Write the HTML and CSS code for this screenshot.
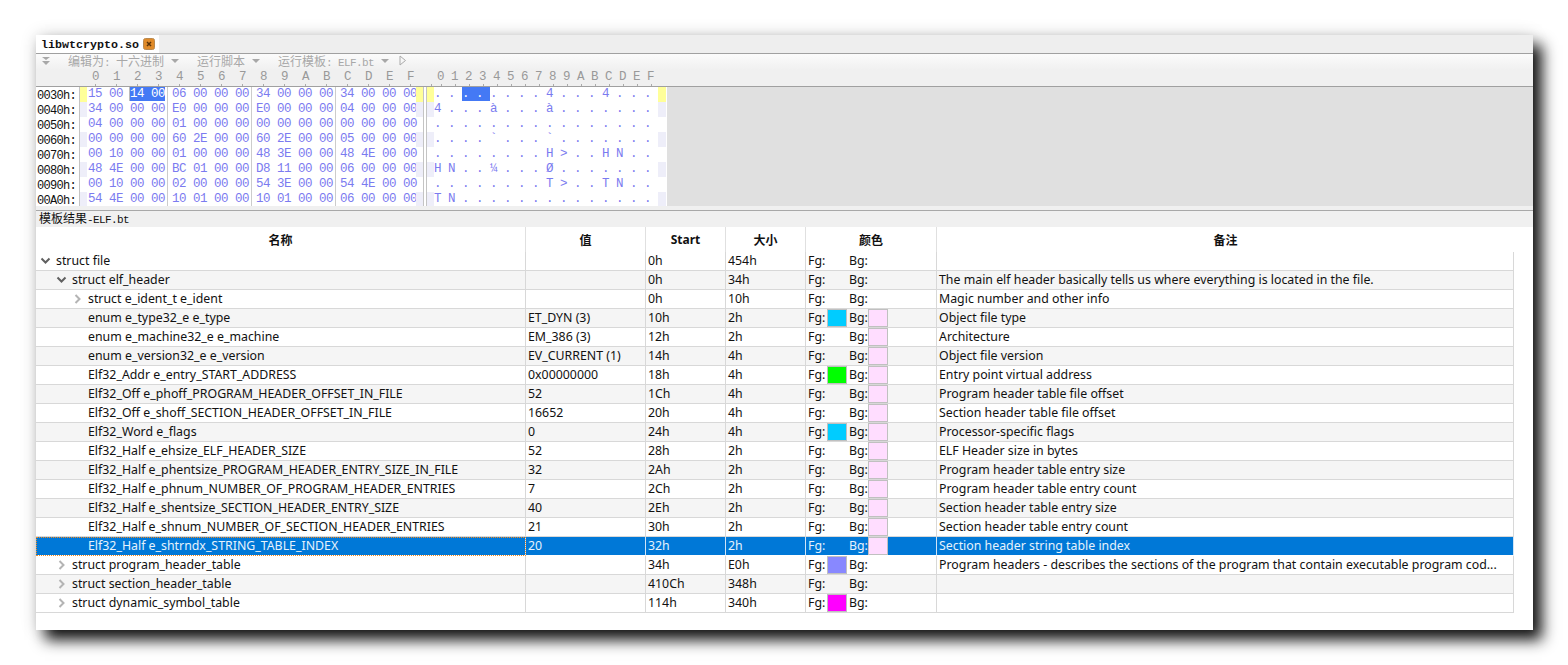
FILE: index.html
```html
<!DOCTYPE html>
<html lang="zh">
<head>
    <meta charset="UTF-8">
    <title>libwtcrypto.so</title>
    <link rel="stylesheet" href="styles.css">
</head>
<body>
    <div class="window">
        <div class="tabbar">
            <div class="tab">
                <span class="tab-name">libwtcrypto.so</span>
                <svg class="tab-close" width="12" height="12" viewBox="0 0 12 12">
                    <rect x="0.5" y="0.5" width="11" height="11" rx="2" fill="#e08a28" stroke="#b9894f"/>
                    <path d="M4 4l4 4M8 4l-4 4" stroke="#5a3208" stroke-width="1.5" fill="none"/>
                </svg>
            </div>
        </div>

        <div class="toolbar-area">
            <div class="toolbar">
                <svg class="tool-menu" width="10" height="10" viewBox="0 0 10 10">
                    <path d="M1 1h8L5 4zM1 5h8L5 9z" fill="#a8a8a8"/>
                </svg>
                <span class="tool tool-first">编辑为<span class="latin">: </span>十六进制</span>
                <span class="caret"></span>
                <span class="tool">运行脚本</span>
                <span class="caret"></span>
                <span class="tool">运行模板<span class="latin">: ELF.bt</span></span>
                <span class="caret"></span>
                <svg class="tool-play" width="8" height="11" viewBox="0 0 8 11">
                    <path d="M1 1l5.5 4.5L1 10z" fill="none" stroke="#aaa"/>
                </svg>
            </div>
            <div class="ruler">
                <span class="ruler-hex">0  1  2  3  4  5  6  7  8  9  A  B  C  D  E  F</span>
                <span class="ruler-chars">0 1 2 3 4 5 6 7 8 9 A B C D E F</span>
            </div>
        </div>

        <div class="hex-view">
            <div class="hex-row first">
                <span class="offset">0030h:</span><span class="mark"></span>
                <span class="bytes">15 00 <b class="cursor">14 00</b> 06 00 00 00 34 00 00 00 34 00 00 00</span>
                <span class="mark"></span><span class="divider"></span><span class="mark"></span>
                <span class="chars">. . <b class="cursor">. . </b>. . . . 4 . . . 4 . . .</span>
                <span class="mark wide"></span>
            </div>
            <div class="hex-row alt">
                <span class="offset">0040h:</span><span class="mark"></span>
                <span class="bytes">34 00 00 00 E0 00 00 00 E0 00 00 00 04 00 00 00</span>
                <span class="mark"></span><span class="divider"></span><span class="mark"></span>
                <span class="chars">4 . . . à . . . à . . . . . . .</span>
                <span class="mark wide"></span>
            </div>
            <div class="hex-row">
                <span class="offset">0050h:</span><span class="mark"></span>
                <span class="bytes">04 00 00 00 01 00 00 00 00 00 00 00 00 00 00 00</span>
                <span class="mark"></span><span class="divider"></span><span class="mark"></span>
                <span class="chars">. . . . . . . . . . . . . . . .</span>
                <span class="mark wide"></span>
            </div>
            <div class="hex-row alt">
                <span class="offset">0060h:</span><span class="mark"></span>
                <span class="bytes">00 00 00 00 60 2E 00 00 60 2E 00 00 05 00 00 00</span>
                <span class="mark"></span><span class="divider"></span><span class="mark"></span>
                <span class="chars">. . . . ` . . . ` . . . . . . .</span>
                <span class="mark wide"></span>
            </div>
            <div class="hex-row">
                <span class="offset">0070h:</span><span class="mark"></span>
                <span class="bytes">00 10 00 00 01 00 00 00 48 3E 00 00 48 4E 00 00</span>
                <span class="mark"></span><span class="divider"></span><span class="mark"></span>
                <span class="chars">. . . . . . . . H &gt; . . H N . .</span>
                <span class="mark wide"></span>
            </div>
            <div class="hex-row alt">
                <span class="offset">0080h:</span><span class="mark"></span>
                <span class="bytes">48 4E 00 00 BC 01 00 00 D8 11 00 00 06 00 00 00</span>
                <span class="mark"></span><span class="divider"></span><span class="mark"></span>
                <span class="chars">H N . . ¼ . . . Ø . . . . . . .</span>
                <span class="mark wide"></span>
            </div>
            <div class="hex-row">
                <span class="offset">0090h:</span><span class="mark"></span>
                <span class="bytes">00 10 00 00 02 00 00 00 54 3E 00 00 54 4E 00 00</span>
                <span class="mark"></span><span class="divider"></span><span class="mark"></span>
                <span class="chars">. . . . . . . . T &gt; . . T N . .</span>
                <span class="mark wide"></span>
            </div>
            <div class="hex-row alt">
                <span class="offset">00A0h:</span><span class="mark"></span>
                <span class="bytes">54 4E 00 00 10 01 00 00 10 01 00 00 06 00 00 00</span>
                <span class="mark"></span><span class="divider"></span><span class="mark"></span>
                <span class="chars">T N . . . . . . . . . . . . . .</span>
                <span class="mark wide"></span>
            </div>
        </div>

        <div class="hex-foot"></div>
        <div class="panel-title">模板结果<span class="latin">-ELF.bt</span></div>

        <table class="results">
            <colgroup>
                <col class="col-name"><col class="col-value"><col class="col-start">
                <col class="col-size"><col class="col-color"><col class="col-note">
            </colgroup>
            <thead>
                <tr><th>名称</th><th>值</th><th>Start</th><th>大小</th><th>颜色</th><th>备注</th></tr>
            </thead>
            <tbody>
                <tr>
                    <td class="name lv0"><svg class="arrow" width="16" height="12" viewBox="0 0 16 12"><path d="M1.5 3.5l4 4 4-4" class="arrow-open"/></svg>struct file</td>
                    <td></td><td>0h</td><td>454h</td>
                    <td><div class="colors"><span class="fg">Fg:</span><span class="swatch none"></span><span class="bg">Bg:</span></div></td>
                    <td></td>
                </tr>
                <tr>
                    <td class="name lv1"><svg class="arrow" width="16" height="12" viewBox="0 0 16 12"><path d="M1.5 3.5l4 4 4-4" class="arrow-open"/></svg>struct elf_header</td>
                    <td></td><td>0h</td><td>34h</td>
                    <td><div class="colors"><span class="fg">Fg:</span><span class="swatch none"></span><span class="bg">Bg:</span></div></td>
                    <td>The main elf header basically tells us where everything is located in the file.</td>
                </tr>
                <tr>
                    <td class="name lv2"><svg class="arrow" width="16" height="12" viewBox="0 0 16 12"><path d="M3.5 2l4 4-4 4" class="arrow-shut"/></svg>struct e_ident_t e_ident</td>
                    <td></td><td>0h</td><td>10h</td>
                    <td><div class="colors"><span class="fg">Fg:</span><span class="swatch none"></span><span class="bg">Bg:</span></div></td>
                    <td>Magic number and other info</td>
                </tr>
                <tr>
                    <td class="name lv2 leaf">enum e_type32_e e_type</td>
                    <td>ET_DYN (3)</td><td>10h</td><td>2h</td>
                    <td><div class="colors"><span class="fg">Fg:</span><span class="swatch cyan"></span><span class="bg">Bg:</span><span class="swatch pink"></span></div></td>
                    <td>Object file type</td>
                </tr>
                <tr>
                    <td class="name lv2 leaf">enum e_machine32_e e_machine</td>
                    <td>EM_386 (3)</td><td>12h</td><td>2h</td>
                    <td><div class="colors"><span class="fg">Fg:</span><span class="swatch none"></span><span class="bg">Bg:</span><span class="swatch pink"></span></div></td>
                    <td>Architecture</td>
                </tr>
                <tr>
                    <td class="name lv2 leaf">enum e_version32_e e_version</td>
                    <td>EV_CURRENT (1)</td><td>14h</td><td>4h</td>
                    <td><div class="colors"><span class="fg">Fg:</span><span class="swatch none"></span><span class="bg">Bg:</span><span class="swatch pink"></span></div></td>
                    <td>Object file version</td>
                </tr>
                <tr>
                    <td class="name lv2 leaf">Elf32_Addr e_entry_START_ADDRESS</td>
                    <td>0x00000000</td><td>18h</td><td>4h</td>
                    <td><div class="colors"><span class="fg">Fg:</span><span class="swatch green"></span><span class="bg">Bg:</span><span class="swatch pink"></span></div></td>
                    <td>Entry point virtual address</td>
                </tr>
                <tr>
                    <td class="name lv2 leaf">Elf32_Off e_phoff_PROGRAM_HEADER_OFFSET_IN_FILE</td>
                    <td>52</td><td>1Ch</td><td>4h</td>
                    <td><div class="colors"><span class="fg">Fg:</span><span class="swatch none"></span><span class="bg">Bg:</span><span class="swatch pink"></span></div></td>
                    <td>Program header table file offset</td>
                </tr>
                <tr>
                    <td class="name lv2 leaf">Elf32_Off e_shoff_SECTION_HEADER_OFFSET_IN_FILE</td>
                    <td>16652</td><td>20h</td><td>4h</td>
                    <td><div class="colors"><span class="fg">Fg:</span><span class="swatch none"></span><span class="bg">Bg:</span><span class="swatch pink"></span></div></td>
                    <td>Section header table file offset</td>
                </tr>
                <tr>
                    <td class="name lv2 leaf">Elf32_Word e_flags</td>
                    <td>0</td><td>24h</td><td>4h</td>
                    <td><div class="colors"><span class="fg">Fg:</span><span class="swatch cyan"></span><span class="bg">Bg:</span><span class="swatch pink"></span></div></td>
                    <td>Processor-specific flags</td>
                </tr>
                <tr>
                    <td class="name lv2 leaf">Elf32_Half e_ehsize_ELF_HEADER_SIZE</td>
                    <td>52</td><td>28h</td><td>2h</td>
                    <td><div class="colors"><span class="fg">Fg:</span><span class="swatch none"></span><span class="bg">Bg:</span><span class="swatch pink"></span></div></td>
                    <td>ELF Header size in bytes</td>
                </tr>
                <tr>
                    <td class="name lv2 leaf">Elf32_Half e_phentsize_PROGRAM_HEADER_ENTRY_SIZE_IN_FILE</td>
                    <td>32</td><td>2Ah</td><td>2h</td>
                    <td><div class="colors"><span class="fg">Fg:</span><span class="swatch none"></span><span class="bg">Bg:</span><span class="swatch pink"></span></div></td>
                    <td>Program header table entry size</td>
                </tr>
                <tr>
                    <td class="name lv2 leaf">Elf32_Half e_phnum_NUMBER_OF_PROGRAM_HEADER_ENTRIES</td>
                    <td>7</td><td>2Ch</td><td>2h</td>
                    <td><div class="colors"><span class="fg">Fg:</span><span class="swatch none"></span><span class="bg">Bg:</span><span class="swatch pink"></span></div></td>
                    <td>Program header table entry count</td>
                </tr>
                <tr>
                    <td class="name lv2 leaf">Elf32_Half e_shentsize_SECTION_HEADER_ENTRY_SIZE</td>
                    <td>40</td><td>2Eh</td><td>2h</td>
                    <td><div class="colors"><span class="fg">Fg:</span><span class="swatch none"></span><span class="bg">Bg:</span><span class="swatch pink"></span></div></td>
                    <td>Section header table entry size</td>
                </tr>
                <tr>
                    <td class="name lv2 leaf">Elf32_Half e_shnum_NUMBER_OF_SECTION_HEADER_ENTRIES</td>
                    <td>21</td><td>30h</td><td>2h</td>
                    <td><div class="colors"><span class="fg">Fg:</span><span class="swatch none"></span><span class="bg">Bg:</span><span class="swatch pink"></span></div></td>
                    <td>Section header table entry count</td>
                </tr>
                <tr class="selected">
                    <td class="name lv2 leaf">Elf32_Half e_shtrndx_STRING_TABLE_INDEX</td>
                    <td>20</td><td>32h</td><td>2h</td>
                    <td><div class="colors"><span class="fg">Fg:</span><span class="swatch none"></span><span class="bg">Bg:</span><span class="swatch pink"></span></div></td>
                    <td>Section header string table index</td>
                </tr>
                <tr>
                    <td class="name lv1"><svg class="arrow" width="16" height="12" viewBox="0 0 16 12"><path d="M3.5 2l4 4-4 4" class="arrow-shut"/></svg>struct program_header_table</td>
                    <td></td><td>34h</td><td>E0h</td>
                    <td><div class="colors"><span class="fg">Fg:</span><span class="swatch violet"></span><span class="bg">Bg:</span></div></td>
                    <td>Program headers - describes the sections of the program that contain executable program cod...</td>
                </tr>
                <tr>
                    <td class="name lv1"><svg class="arrow" width="16" height="12" viewBox="0 0 16 12"><path d="M3.5 2l4 4-4 4" class="arrow-shut"/></svg>struct section_header_table</td>
                    <td></td><td>410Ch</td><td>348h</td>
                    <td><div class="colors"><span class="fg">Fg:</span><span class="swatch none"></span><span class="bg">Bg:</span></div></td>
                    <td></td>
                </tr>
                <tr>
                    <td class="name lv1"><svg class="arrow" width="16" height="12" viewBox="0 0 16 12"><path d="M3.5 2l4 4-4 4" class="arrow-shut"/></svg>struct dynamic_symbol_table</td>
                    <td></td><td>114h</td><td>340h</td>
                    <td><div class="colors"><span class="fg">Fg:</span><span class="swatch magenta"></span><span class="bg">Bg:</span></div></td>
                    <td></td>
                </tr>
            </tbody>
        </table>
    </div>
</body>
</html>
```

FILE: styles.css
```css
html, body {
    margin: 0;
    padding: 0;
    background: #fff;
    overflow: hidden;
}

body {
    height: 665px;
    font-family: "Noto Sans", "Noto Sans CJK SC", sans-serif;
    font-size: 12px;
}

.window {
    width: 1497px;
    height: 595px;
    margin: 35px 0 0 36px;
    background: #fff;
    box-shadow: 9px 10px 14px rgba(0, 0, 0, 0.92), 0 0 16px rgba(0, 0, 0, 0.14);
}

.latin {
    font-family: "Liberation Mono", monospace;
    font-size: 11px;
    letter-spacing: -0.6px;
    white-space: pre;
}

/* tabs */
.tabbar {
    height: 18px;
    background: #eeeeee;
    border-bottom: 1px solid #a0a0a0;
}

.tab {
    display: flex;
    align-items: center;
    width: 123px;
    height: 18px;
    padding-left: 5px;
    box-sizing: border-box;
    background: #fff;
}

.tab-name {
    width: 102px;
    padding-top: 1px;
    font-family: "Liberation Mono", monospace;
    font-size: 11.67px;
    font-weight: bold;
    color: #111;
}

/* toolbar + ruler */
.toolbar-area {
    height: 32px;
    background: linear-gradient(#fbfbfb, #f0f0f0 50%);
    border-bottom: 1px solid #a0a0a0;
}

.toolbar {
    display: flex;
    align-items: center;
    height: 15px;
    padding: 0 0 2px 5px;
    box-sizing: border-box;
    color: #a8a8a8;
    font-size: 12px;
}

.tool-first {
    margin-left: 17px;
}

.tool {
    white-space: nowrap;
}

.caret {
    width: 0;
    height: 0;
    margin: 0 18px 0 7px;
    border-left: 4px solid transparent;
    border-right: 4px solid transparent;
    border-top: 4px solid #a8a8a8;
}

.tool-play {
    margin-left: -8px;
}

.ruler {
    display: flex;
    height: 17px;
    font-family: "Liberation Mono", monospace;
    font-size: 12.5px;
    letter-spacing: -0.5px;
    line-height: 17px;
    color: #999;
    white-space: pre;
}

.ruler-hex {
    width: 345px;
    margin-left: 56px;
    background: linear-gradient(90deg, #aaa 1px, transparent 1px) 3px bottom / 21px 2px repeat-x;
}

.ruler-chars {
    width: 224px;
    background: linear-gradient(90deg, #aaa 1px, transparent 1px) 4px bottom / 14px 2px repeat-x;
}

/* hex dump */
.hex-view {
    height: 119px;
    overflow: hidden;
    background: #e0e0e0;
}

.hex-row {
    display: flex;
    height: 15px;
    width: 631px;
    background: #fff;
    font-family: "Liberation Mono", monospace;
    font-size: 12.5px;
    letter-spacing: -0.5px;
    line-height: 15px;
    white-space: pre;
    color: #7b7bf0;
}

.offset {
    width: 44px;
    padding: 2px 0 0 1px;
    box-sizing: border-box;
    border-right: 1px solid #c4c4c4;
    font-size: 12px;
    letter-spacing: -0.7px;
    color: #111;
}

.mark {
    width: 7px;
}

.mark.wide {
    width: 8px;
}

.hex-row.first .mark {
    background: #ffff99;
}

.hex-row.alt .mark {
    background: #eeeef9;
}

.bytes {
    width: 329px;
    padding-left: 1px;
    box-sizing: border-box;
    background: linear-gradient(90deg, transparent 80px, #ccc 80px, #ccc 81px, transparent 81px) 0 0 / 84px 100% repeat-x;
}

.divider {
    width: 2px;
    border-left: 1px solid #c4c4c4;
    border-right: 1px solid #c4c4c4;
}

.chars {
    width: 224px;
}

.cursor {
    font-weight: normal;
    background: #4479f5;
    color: #fff;
}

.bytes .cursor {
    box-shadow: -1px 0 #bbb;
}

.hex-foot {
    height: 4px;
    background: #f0f0f0;
    border-bottom: 1px solid #a8a8a8;
}

.panel-title {
    height: 16px;
    padding-left: 3px;
    background: #f0f0f0;
    font-size: 12px;
    line-height: 15px;
    color: #111;
}

/* template results */
.results {
    table-layout: fixed;
    width: 1478px;
    border-collapse: separate;
    border-spacing: 0;
    color: #111;
}

.col-name { width: 490px; }
.col-value { width: 120px; }
.col-start, .col-size { width: 80px; }
.col-color { width: 131px; }
.col-note { width: 577px; }

.results th {
    height: 25px;
    padding: 0;
    font-size: 12px;
    font-weight: bold;
    border-right: 1px solid #e0e0e0;
}

.results th:last-child {
    border-right: 0;
}

.results td {
    height: 18px;
    padding: 0 0 0 2px;
    border-right: 1px solid #d8d8d8;
    border-bottom: 1px solid #d8d8d8;
    font-size: 12.35px;
    line-height: 18px;
    white-space: nowrap;
    overflow: hidden;
}

.results tbody tr:nth-child(even) td {
    background: #f5f5f5;
}

.results td.name { padding-left: 0; }
.results td.lv0 { padding-left: 4px; }
.results td.lv1 { padding-left: 20px; }
.results td.lv2 { padding-left: 36px; }
.results td.leaf { padding-left: 52px; }

.arrow {
    vertical-align: -2px;
}

.arrow-open {
    fill: none;
    stroke: #606060;
    stroke-width: 2;
}

.arrow-shut {
    fill: none;
    stroke: #b4b4b4;
    stroke-width: 2;
}

.results tbody tr.selected td {
    background: #0078d7;
    color: #e6f2fc;
    border-right-color: #cfe4f6;
    border-bottom-color: #fff;
}

.results tbody tr.selected td.name {
    outline: 1px dotted #f08a24;
    outline-offset: -1px;
}

.colors {
    display: flex;
    align-items: center;
    height: 18px;
}

.fg {
    width: 19px;
}

.bg {
    width: 19px;
    margin-left: 2px;
}

.swatch {
    width: 18px;
    height: 16px;
    border: 1px solid #c0c0c0;
}

.swatch.none { border-color: transparent; }
.swatch.cyan { background: #00ccff; }
.swatch.green { background: #00ff00; }
.swatch.violet { background: #8888ff; }
.swatch.magenta { background: #ff00ff; }
.swatch.pink { background: #ffddff; }
```
